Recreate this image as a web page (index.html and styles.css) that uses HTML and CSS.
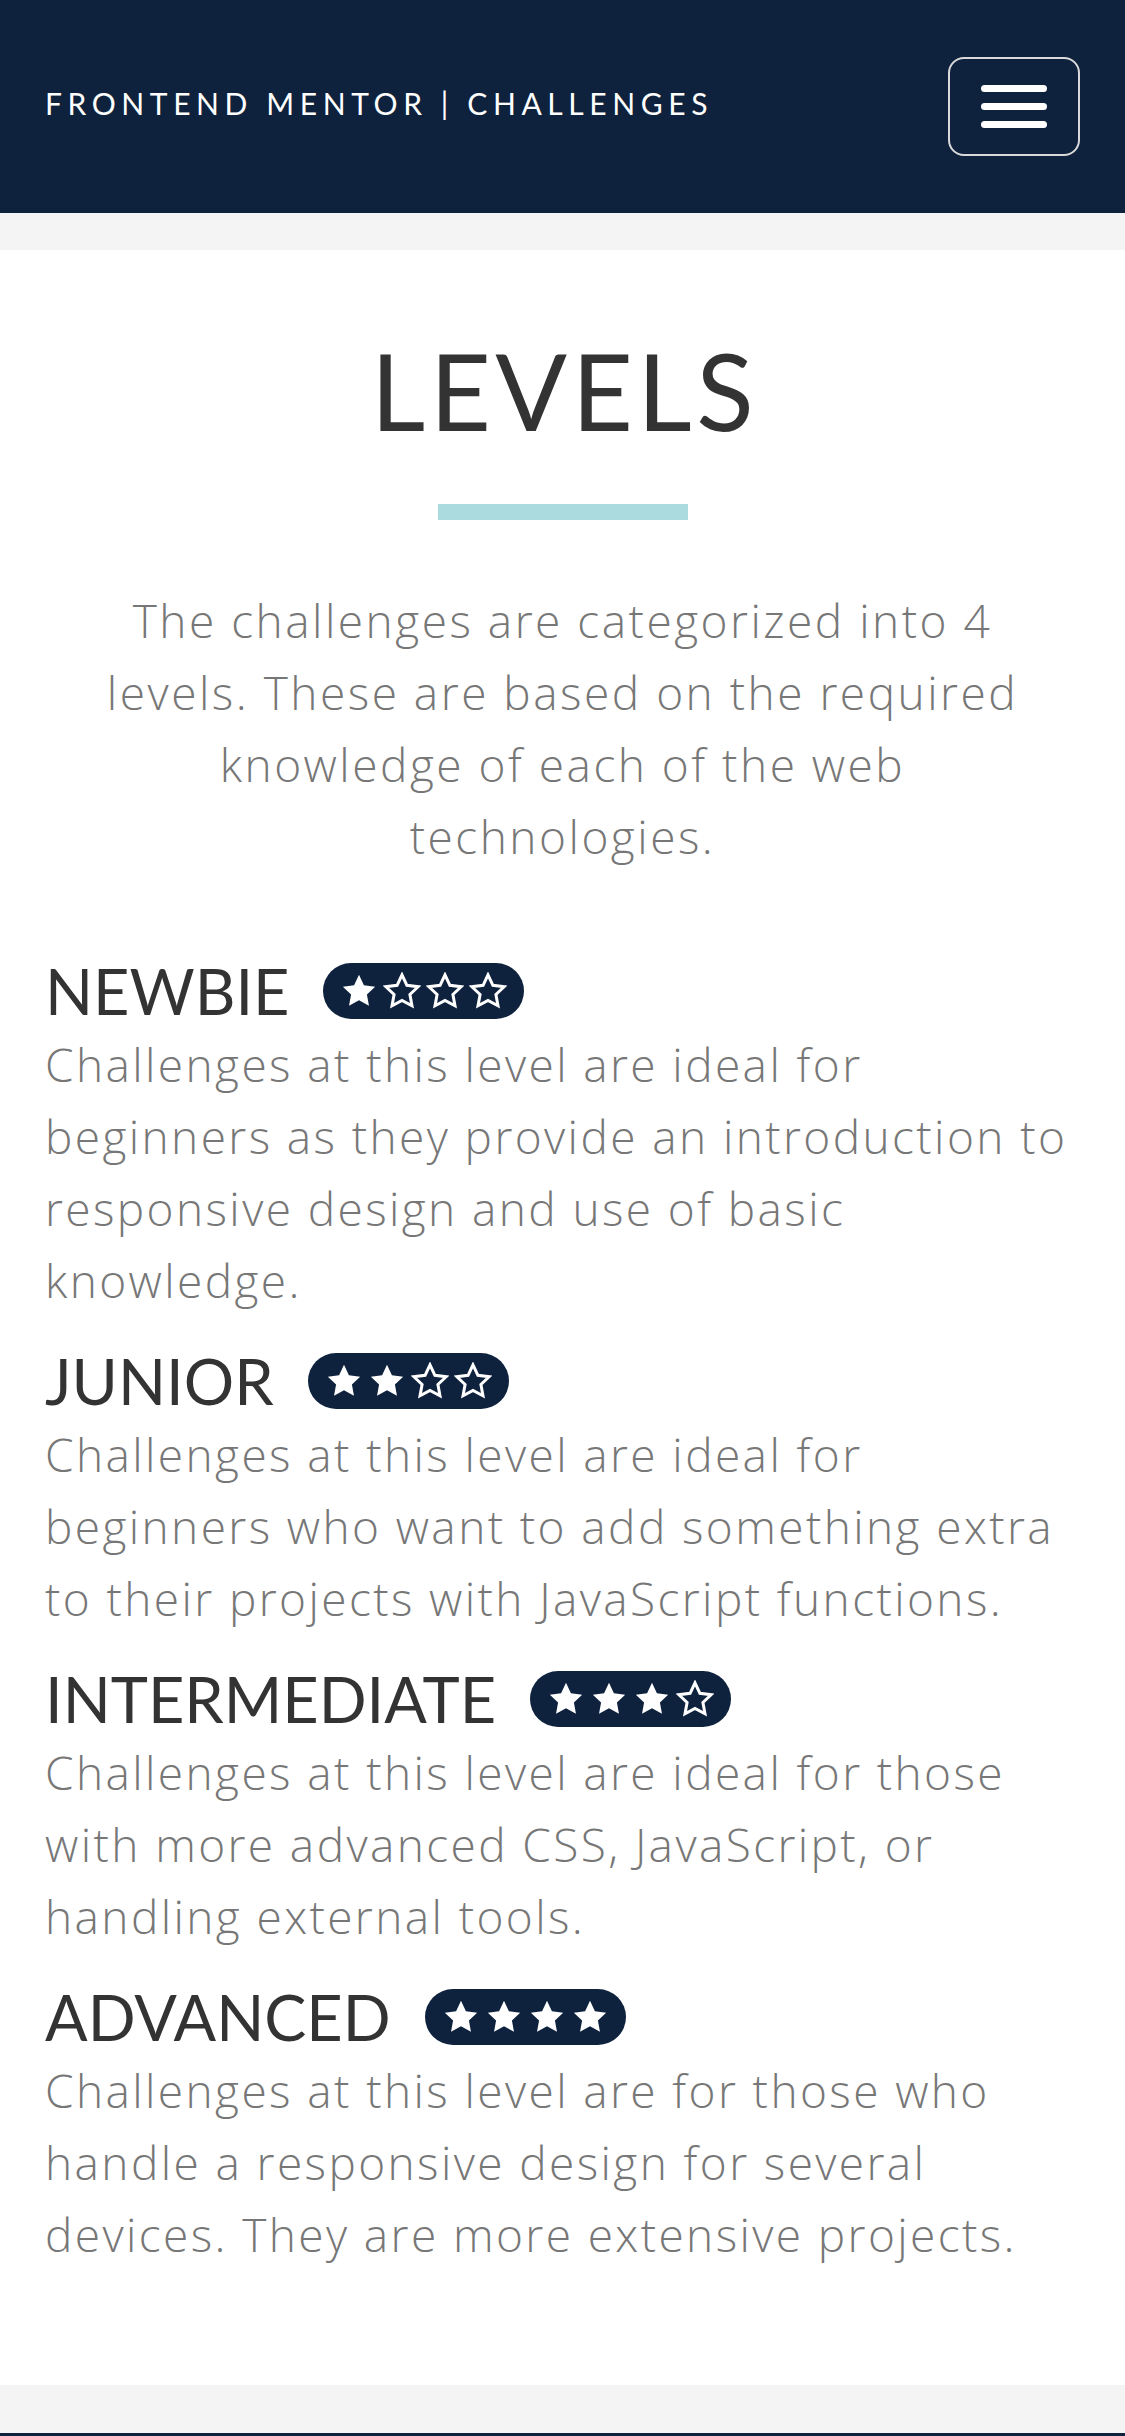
FILE: index.html
```html
<!DOCTYPE html>
<html lang="en">
<head>
<meta charset="utf-8">
<title>Levels | Frontend Mentor Challenges</title>
<link rel="stylesheet" href="styles.css">
</head>
<body>
<header class="topbar">
  <a class="brand" href="#">FRONTEND MENTOR | CHALLENGES</a>
  <button class="menu-btn" aria-label="Menu">
    <span class="bar"></span><span class="bar"></span><span class="bar"></span>
  </button>
</header>
<div class="band"></div>
<main class="levels">
  <h1 class="title">LEVELS</h1>
  <div class="underline"></div>
  <p class="intro">The challenges are categorized into 4 levels. These are based on the required knowledge of each of the web technologies.</p>

  <section class="level">
    <div class="level-head">
      <h2 class="level-name">NEWBIE</h2>
      <span class="stars">
        <svg viewBox="0 0 24 24" class="star full"><path d="M12 1.8l3.1 6.6 7.1.9-5.2 4.9 1.3 7.1L12 17.9l-6.3 3.4 1.3-7.1L1.8 9.3l7.1-.9z"/></svg>
        <svg viewBox="0 0 24 24" class="star empty"><path d="M12 1.8l3.1 6.6 7.1.9-5.2 4.9 1.3 7.1L12 17.9l-6.3 3.4 1.3-7.1L1.8 9.3l7.1-.9z"/></svg>
        <svg viewBox="0 0 24 24" class="star empty"><path d="M12 1.8l3.1 6.6 7.1.9-5.2 4.9 1.3 7.1L12 17.9l-6.3 3.4 1.3-7.1L1.8 9.3l7.1-.9z"/></svg>
        <svg viewBox="0 0 24 24" class="star empty"><path d="M12 1.8l3.1 6.6 7.1.9-5.2 4.9 1.3 7.1L12 17.9l-6.3 3.4 1.3-7.1L1.8 9.3l7.1-.9z"/></svg>
      </span>
    </div>
    <p class="level-desc">Challenges at this level are ideal for beginners as they provide an introduction to responsive design and use of basic knowledge.</p>
  </section>

  <section class="level">
    <div class="level-head">
      <h2 class="level-name">JUNIOR</h2>
      <span class="stars">
        <svg viewBox="0 0 24 24" class="star full"><path d="M12 1.8l3.1 6.6 7.1.9-5.2 4.9 1.3 7.1L12 17.9l-6.3 3.4 1.3-7.1L1.8 9.3l7.1-.9z"/></svg>
        <svg viewBox="0 0 24 24" class="star full"><path d="M12 1.8l3.1 6.6 7.1.9-5.2 4.9 1.3 7.1L12 17.9l-6.3 3.4 1.3-7.1L1.8 9.3l7.1-.9z"/></svg>
        <svg viewBox="0 0 24 24" class="star empty"><path d="M12 1.8l3.1 6.6 7.1.9-5.2 4.9 1.3 7.1L12 17.9l-6.3 3.4 1.3-7.1L1.8 9.3l7.1-.9z"/></svg>
        <svg viewBox="0 0 24 24" class="star empty"><path d="M12 1.8l3.1 6.6 7.1.9-5.2 4.9 1.3 7.1L12 17.9l-6.3 3.4 1.3-7.1L1.8 9.3l7.1-.9z"/></svg>
      </span>
    </div>
    <p class="level-desc">Challenges at this level are ideal for beginners who want to add something extra to their projects with JavaScript functions.</p>
  </section>

  <section class="level">
    <div class="level-head">
      <h2 class="level-name">INTERMEDIATE</h2>
      <span class="stars">
        <svg viewBox="0 0 24 24" class="star full"><path d="M12 1.8l3.1 6.6 7.1.9-5.2 4.9 1.3 7.1L12 17.9l-6.3 3.4 1.3-7.1L1.8 9.3l7.1-.9z"/></svg>
        <svg viewBox="0 0 24 24" class="star full"><path d="M12 1.8l3.1 6.6 7.1.9-5.2 4.9 1.3 7.1L12 17.9l-6.3 3.4 1.3-7.1L1.8 9.3l7.1-.9z"/></svg>
        <svg viewBox="0 0 24 24" class="star full"><path d="M12 1.8l3.1 6.6 7.1.9-5.2 4.9 1.3 7.1L12 17.9l-6.3 3.4 1.3-7.1L1.8 9.3l7.1-.9z"/></svg>
        <svg viewBox="0 0 24 24" class="star empty"><path d="M12 1.8l3.1 6.6 7.1.9-5.2 4.9 1.3 7.1L12 17.9l-6.3 3.4 1.3-7.1L1.8 9.3l7.1-.9z"/></svg>
      </span>
    </div>
    <p class="level-desc">Challenges at this level are ideal for those with more advanced CSS, JavaScript, or handling external tools.</p>
  </section>

  <section class="level">
    <div class="level-head">
      <h2 class="level-name">ADVANCED</h2>
      <span class="stars">
        <svg viewBox="0 0 24 24" class="star full"><path d="M12 1.8l3.1 6.6 7.1.9-5.2 4.9 1.3 7.1L12 17.9l-6.3 3.4 1.3-7.1L1.8 9.3l7.1-.9z"/></svg>
        <svg viewBox="0 0 24 24" class="star full"><path d="M12 1.8l3.1 6.6 7.1.9-5.2 4.9 1.3 7.1L12 17.9l-6.3 3.4 1.3-7.1L1.8 9.3l7.1-.9z"/></svg>
        <svg viewBox="0 0 24 24" class="star full"><path d="M12 1.8l3.1 6.6 7.1.9-5.2 4.9 1.3 7.1L12 17.9l-6.3 3.4 1.3-7.1L1.8 9.3l7.1-.9z"/></svg>
        <svg viewBox="0 0 24 24" class="star full"><path d="M12 1.8l3.1 6.6 7.1.9-5.2 4.9 1.3 7.1L12 17.9l-6.3 3.4 1.3-7.1L1.8 9.3l7.1-.9z"/></svg>
      </span>
    </div>
    <p class="level-desc">Challenges at this level are for those who handle a responsive design for several devices. They are more extensive projects.</p>
  </section>
</main>
<div class="band band-bottom"></div>
<footer class="footer"></footer>
</body>
</html>
```

FILE: styles.css
```css
* { box-sizing: border-box; }

html, body {
  margin: 0;
  padding: 0;
  background: #ffffff;
}

body {
  font-family: "Open Sans", "Liberation Sans", sans-serif;
  color: #777777;
  min-height: 100vh;
  display: flex;
  flex-direction: column;
}

.topbar {
  height: 213px;
  flex-shrink: 0;
  background: #0e223d;
  display: flex;
  align-items: center;
  justify-content: space-between;
  padding: 0 45px;
}

.brand {
  color: #ffffff;
  text-decoration: none;
  font-family: "Lato", sans-serif;
  font-weight: 400;
  font-size: 30px;
  letter-spacing: 5.6px;
  margin-top: -7px;
}

.menu-btn {
  width: 132px;
  height: 99px;
  border: 2px solid #d9d9d9;
  border-radius: 16px;
  background: transparent;
  display: flex;
  flex-direction: column;
  align-items: center;
  justify-content: center;
  gap: 11px;
  padding: 0;
}

.bar {
  display: block;
  width: 66px;
  height: 7px;
  border-radius: 4px;
  background: #ffffff;
}

.band {
  height: 37px;
  flex-shrink: 0;
  background: #f4f4f4;
}

.band-bottom {
  height: 48px;
}

.footer {
  flex: 1 0 3px;
  background: #0e223d;
}

.levels {
  padding: 77px 45px 115px;
  display: flex;
  flex-direction: column;
}

.title {
  margin: 0;
  padding-left: 4px;
  text-align: center;
  font-family: "Lato", sans-serif;
  font-weight: 400;
  font-size: 106px;
  line-height: 127px;
  color: #333333;
  letter-spacing: 4.5px;
}

.underline {
  width: 250px;
  height: 16px;
  background: #acdbdf;
  margin: 50px auto 0;
}

.intro {
  margin: 64px 28px 0;
  text-align: center;
  font-weight: 300;
  font-size: 46px;
  line-height: 72px;
  letter-spacing: 2.5px;
}

.level {
  display: flex;
  flex-direction: column;
}

.intro + .level {
  margin-top: 82px;
}

.level + .level {
  margin-top: 28px;
}

.level-head {
  display: flex;
  align-items: center;
  gap: 34px;
  height: 74px;
}

.level-name {
  margin: 0;
  font-family: "Lato", sans-serif;
  font-weight: 400;
  font-size: 63px;
  line-height: 74px;
  color: #333333;
}

.stars {
  display: inline-flex;
  align-items: center;
  gap: 5px;
  height: 56px;
  padding: 0 17px;
  background: #0e223d;
  border-radius: 28px;
}

.star {
  width: 38px;
  height: 38px;
}

.star.full path {
  fill: #ffffff;
}

.star.empty path {
  fill: none;
  stroke: #ffffff;
  stroke-width: 1.9;
  stroke-linejoin: miter;
}

.level-desc {
  margin: 0;
  font-weight: 300;
  font-size: 46px;
  line-height: 72px;
  letter-spacing: 2.4px;
}
```
